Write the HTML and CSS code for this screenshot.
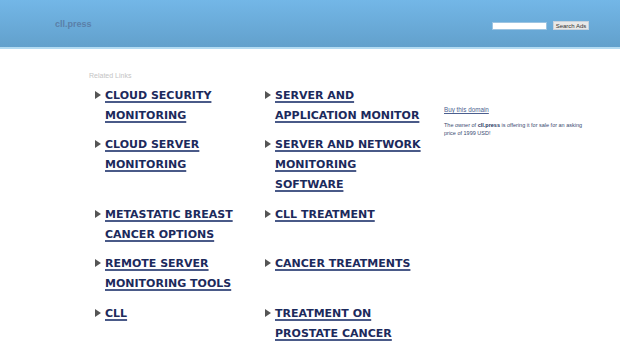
FILE: index.html
```html
<!DOCTYPE html>
<html lang="en">
<head>
<meta charset="UTF-8" />
<meta name="viewport" content="width=device-width, initial-scale=1" />
<title>cll.press</title>
<link rel="stylesheet" href="styles.css">
</head>
<body>
  <div class="header">
    <div class="logo">cll.press</div>
    <form class="search" onsubmit="return false">
      <input type="text" class="search-input" />
      <button class="search-button">Search Ads</button>
    </form>
  </div>

  <div class="content">
    <div class="links">
      <div class="related">Related Links</div>
      <div class="grid">
        <a class="link" href="#">CLOUD SECURITY MONITORING</a>
        <a class="link" href="#">SERVER AND APPLICATION MONITOR</a>
        <a class="link" href="#">CLOUD SERVER MONITORING</a>
        <a class="link" href="#">SERVER AND NETWORK MONITORING SOFTWARE</a>
        <a class="link" href="#">METASTATIC BREAST CANCER OPTIONS</a>
        <a class="link" href="#">CLL TREATMENT</a>
        <a class="link" href="#">REMOTE SERVER MONITORING TOOLS</a>
        <a class="link" href="#">CANCER TREATMENTS</a>
        <a class="link" href="#">CLL</a>
        <a class="link" href="#">TREATMENT ON PROSTATE CANCER</a>
      </div>
    </div>

    <div class="sidebar">
      <a class="buy" href="#">Buy this domain</a>
      <p class="owner">The owner of <b>cll.press</b> is offering it for sale for an asking price of 1999 USD!</p>
    </div>
  </div>
</body>
</html>
```

FILE: styles.css
```css
body {
  margin: 0;
  background-color: #fff;
  font-family: 'DejaVu Sans', Verdana, sans-serif;
}
.header {
  height: 47px;
  background: linear-gradient(#73b7e7, #62a0cc);
  border-bottom: 2px solid #b3dbf2;
  display: flex;
  align-items: center;
  justify-content: space-between;
  padding: 0 31px 0 55px;
}
.logo {
  font-family: 'Liberation Sans', Arial, sans-serif;
  font-size: 9px;
  font-weight: bold;
  color: #5a7fa8;
}
.search {
  display: flex;
  align-items: center;
  gap: 6px;
  margin: 4px 0 0;
}
.search-input {
  width: 53px;
  height: 6px;
  padding: 0;
  border: 1px solid #9cc4e2;
  background: #fff;
}
.search-button {
  font-family: 'Liberation Sans', Arial, sans-serif;
  font-size: 6px;
  height: 9px;
  width: 36px;
  padding: 0;
  border: 1px solid #c8d2dc;
  background: #e8e8e8;
  color: #333;
}
.content {
  display: flex;
  padding: 23px 0 0 89px;
}
.links {
  width: 355px;
}
.related {
  font-family: 'Liberation Sans', Arial, sans-serif;
  font-size: 7px;
  color: #c4c4c4;
  margin-bottom: 7px;
}
.grid {
  display: grid;
  grid-template-columns: 170px 170px;
  row-gap: 9.4px;
  padding-left: 6px;
}
.link {
  position: relative;
  display: block;
  width: 150px;
  padding-left: 10px;
  font-size: 11px;
  font-weight: bold;
  line-height: 20px;
  color: #1c2a5c;
  text-decoration: underline;
  text-decoration-color: #4a5a88;
  text-decoration-thickness: 1.5px;
  text-underline-offset: 2px;
}
.link::before {
  content: "";
  position: absolute;
  left: 0;
  top: 5px;
  border-left: 6px solid #555;
  border-top: 4.5px solid transparent;
  border-bottom: 4.5px solid transparent;
}
.sidebar {
  width: 150px;
  padding-top: 26px;
  font-family: 'Liberation Sans', Arial, sans-serif;
}
.buy {
  font-size: 6.3px;
  color: #4c5f8f;
}
.owner {
  font-size: 5.5px;
  line-height: 7.5px;
  color: #3a4a70;
  margin: 6px 0 0;
}
.owner b {
  color: #23345e;
}
```
